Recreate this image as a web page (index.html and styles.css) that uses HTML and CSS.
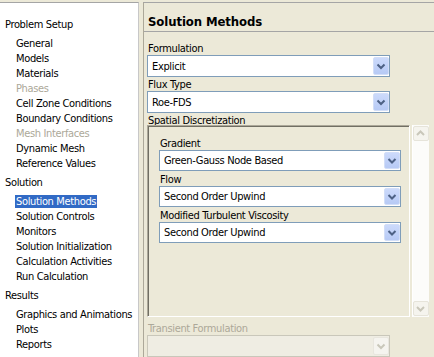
FILE: index.html
```html
<!DOCTYPE html>
<html>
<head>
<meta charset="utf-8">
<link rel="stylesheet" href="styles.css">
</head>
<body>
<div class="app">
  <div class="tree">
    <div class="hdr">Problem Setup</div>
    <div class="item">General</div>
    <div class="item">Models</div>
    <div class="item">Materials</div>
    <div class="item dis">Phases</div>
    <div class="item">Cell Zone Conditions</div>
    <div class="item">Boundary Conditions</div>
    <div class="item dis">Mesh Interfaces</div>
    <div class="item">Dynamic Mesh</div>
    <div class="item">Reference Values</div>
    <div class="hdr">Solution</div>
    <div class="item"><span class="sel">Solution Methods</span></div>
    <div class="item">Solution Controls</div>
    <div class="item">Monitors</div>
    <div class="item">Solution Initialization</div>
    <div class="item">Calculation Activities</div>
    <div class="item">Run Calculation</div>
    <div class="hdr">Results</div>
    <div class="item">Graphics and Animations</div>
    <div class="item">Plots</div>
    <div class="item">Reports</div>
  </div>
  <div class="splitter"></div>
  <div class="main">
    <div class="title">Solution Methods</div>
    <div class="body">
      <div class="label">Formulation</div>
      <div class="combo">
        <span class="val">Explicit</span>
        <span class="btn"><svg viewBox="0 0 16 18" width="16" height="18"><path d="M4.5 7.5 L8 11 L11.5 7.5" fill="none" stroke="#4D6185" stroke-width="2"/></svg></span>
      </div>
      <div class="label">Flux Type</div>
      <div class="combo">
        <span class="val">Roe-FDS</span>
        <span class="btn"><svg viewBox="0 0 16 18" width="16" height="18"><path d="M4.5 7.5 L8 11 L11.5 7.5" fill="none" stroke="#4D6185" stroke-width="2"/></svg></span>
      </div>
      <div class="label group-label">Spatial Discretization</div>
      <div class="group-row">
        <div class="frame">
          <div class="label in">Gradient</div>
          <div class="combo small">
            <span class="val">Green-Gauss Node Based</span>
            <span class="btn"><svg viewBox="0 0 16 17" width="16" height="17"><path d="M4.5 7 L8 10.5 L11.5 7" fill="none" stroke="#4D6185" stroke-width="2"/></svg></span>
          </div>
          <div class="label in">Flow</div>
          <div class="combo small">
            <span class="val">Second Order Upwind</span>
            <span class="btn"><svg viewBox="0 0 16 17" width="16" height="17"><path d="M4.5 7 L8 10.5 L11.5 7" fill="none" stroke="#4D6185" stroke-width="2"/></svg></span>
          </div>
          <div class="label in">Modified Turbulent Viscosity</div>
          <div class="combo small">
            <span class="val">Second Order Upwind</span>
            <span class="btn"><svg viewBox="0 0 16 17" width="16" height="17"><path d="M4.5 7 L8 10.5 L11.5 7" fill="none" stroke="#4D6185" stroke-width="2"/></svg></span>
          </div>
        </div>
        <div class="scrollbar">
          <span class="sbtn"><svg viewBox="0 0 15 15" width="15" height="15"><path d="M4 9 L7.5 5.5 L11 9" fill="none" stroke="#C9C7BA" stroke-width="2"/></svg></span>
          <span class="sbtn"><svg viewBox="0 0 15 15" width="15" height="15"><path d="M4 6 L7.5 9.5 L11 6" fill="none" stroke="#C9C7BA" stroke-width="2"/></svg></span>
        </div>
      </div>
      <div class="label dis">Transient Formulation</div>
      <div class="combo disabled">
        <span class="val"></span>
        <span class="btn"><svg viewBox="0 0 16 18" width="16" height="18"><path d="M4.5 7.5 L8 11 L11.5 7.5" fill="none" stroke="#C9C7BA" stroke-width="2"/></svg></span>
      </div>
    </div>
  </div>
</div>
</body>
</html>
```
FILE: styles.css
```css
* { box-sizing: border-box; }
html, body { margin: 0; padding: 0; }
body {
  font-family: "DejaVu Sans Condensed", "Liberation Sans", sans-serif;
  font-stretch: semi-condensed;
  font-size: 11px;
  letter-spacing: -0.35px;
  color: #000;
  background: #ECE9D8;
  overflow: hidden;
}
.app {
  display: flex;
  height: 357px;
  padding-top: 2px;
}
.tree {
  width: 139px;
  flex: none;
  background: #fff;
  border-top: 1px solid #A5A5A5;
  border-right: 1px solid #C8C8C8;
  padding-top: 10px;
}
.hdr {
  height: 23px;
  line-height: 23px;
  padding-left: 5px;
}
.item {
  height: 15px;
  line-height: 15px;
  padding-left: 16px;
  white-space: nowrap;
}
.dis { color: #ACA899; }
.sel {
  display: inline-block;
  background: #316AC5;
  color: #fff;
  line-height: 13px;
  padding: 0 1px;
  margin-left: -1px;
}
.splitter { width: 4px; flex: none; }
.main {
  flex: 1;
  border-top: 1px solid #A5A5A5;
  border-left: 1px solid #ACA899;
}
.title {
  height: 29px;
  padding: 9px 0 0 4px;
  line-height: 19px;
  font-size: 13px;
  font-weight: bold;
  letter-spacing: -0.1px;
  border-bottom: 1px solid #A5A5A5;
}
.body {
  padding: 9px 0 0 3px;
}
.label {
  height: 14px;
  line-height: 13px;
  padding-top: 1px;
  padding-left: 1px;
  white-space: nowrap;
}
.group-label { margin-bottom: -2px; }
.combo {
  width: 243px;
  height: 22px;
  border: 1px solid #7F9DB9;
  background: #fff;
  display: flex;
  align-items: center;
}
.combo .val {
  flex: 1;
  padding-left: 4px;
}
.combo .btn {
  width: 16px;
  height: 18px;
  border: 1px solid #D2DEF8;
  border-radius: 2px;
  background: linear-gradient(#CCDAFB, #B7CAF5);
  display: flex;
}
.combo .btn svg { display: block; margin: -1px; }
.group-row {
  display: flex;
  gap: 2px;
  height: 192px;
}
.frame {
  width: 263px;
  border-top: 1px solid #ACA899;
  border-left: 1px solid #ACA899;
  border-right: 1px solid #fff;
  border-bottom: 1px solid #fff;
  box-shadow: inset 1px 1px 0 #716F64;
  padding: 9px 0 0 11px;
}
.label.in { height: 15px; line-height: 13px; padding-top: 2px; }
.combo.small {
  width: 242px;
  height: 21px;
}
.combo.small .btn { height: 17px; }
.scrollbar {
  width: 17px;
  background: #FCFCFA;
  border-left: 1px solid #fff;
  display: flex;
  flex-direction: column;
  justify-content: space-between;
  padding: 1px 0;
}
.sbtn {
  width: 16px;
  height: 15px;
  border: 1px solid #E6E4DA;
  border-radius: 2px;
  background: #F5F4EE;
  display: flex;
}
.sbtn svg { display: block; margin: -1px 0 0 -1px; }
.label.dis { margin-top: 4px; }
.combo.disabled {
  border-color: #C9C7BA;
  background: #EFEDE3;
}
.combo.disabled .btn {
  border-color: #E8E6DE;
  background: #F5F4EF;
}
```
